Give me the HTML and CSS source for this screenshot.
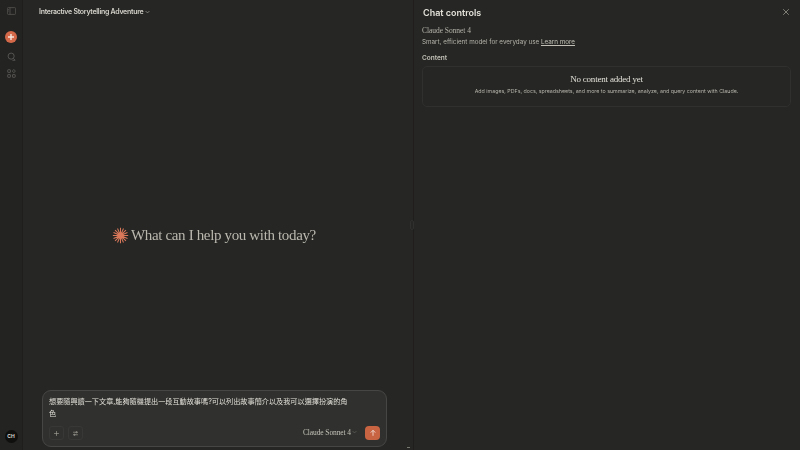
FILE: index.html
```html
<!DOCTYPE html>
<html lang="en">
<head>
    <meta charset="UTF-8">
    <meta name="viewport" content="width=device-width, initial-scale=1.0">
    <title>Interactive Storytelling Adventure</title>
    <link rel="stylesheet" href="styles.css">
</head>
<body>
    <!-- Left icon rail -->
    <div class="sidebar">
        <svg class="rail-icon toggle-icon" viewBox="0 0 12 10"><rect x="0.5" y="0.5" width="11" height="9" rx="1.2"/><path d="M4 0.5V9.5M1.6 3H2.8M1.6 5H2.8"/></svg>
        <div class="new-chat">
            <svg viewBox="0 0 10 10"><path d="M5 2.5V7.5M2.5 5H7.5"/></svg>
        </div>
        <svg class="rail-icon" viewBox="0 0 10 10"><circle cx="4.6" cy="4.6" r="3.4"/><path d="M7.2 7.2L9 9M6 9.2H9.2"/></svg>
        <svg class="rail-icon" viewBox="0 0 10 10"><rect x="0.8" y="0.8" width="3" height="3" rx="0.4"/><path d="M7.6 0.6L9.4 2.3L7.6 4L5.8 2.3Z"/><rect x="0.8" y="6.2" width="3" height="3" rx="0.4"/><rect x="6.1" y="6.2" width="3" height="3" rx="0.4"/></svg>
        <div class="avatar">CH</div>
    </div>

    <div class="main">
        <div class="chat-title">
            <span>Interactive Storytelling Adventure</span>
            <svg class="chevron" viewBox="0 0 8 5"><path d="M1 1L4 4L7 1"/></svg>
        </div>

        <div class="greeting">
            <svg class="spark" viewBox="0 0 20 20">
                <path d="M10 1V19M1 10H19M3.6 3.6L16.4 16.4M16.4 3.6L3.6 16.4M6.5 1.8L13.5 18.2M13.5 1.8L6.5 18.2M1.8 6.5L18.2 13.5M1.8 13.5L18.2 6.5"/>
                <circle cx="10" cy="10" r="3.2"/>
            </svg>
            <h1>What can I help you with today?</h1>
        </div>

        <!-- Message box -->
        <div class="composer">
            <p class="composer-text">想要隨興讀一下文章,能夠隨機提出一段互動故事嗎?可以列出故事簡介以及我可以選擇扮演的角色</p>
            <div class="composer-bar">
                <button class="tool-btn">
                    <svg viewBox="0 0 10 10"><path d="M5 1.5V8.5M1.5 5H8.5"/></svg>
                </button>
                <button class="tool-btn">
                    <svg viewBox="0 0 10 10"><path d="M1.5 3.2H8.5M1.5 6.8H8.5"/><circle cx="6.4" cy="3.2" r="0.9"/><circle cx="3.6" cy="6.8" r="0.9"/></svg>
                </button>
                <div class="model-pick">
                    <span>Claude Sonnet 4</span>
                    <svg class="chevron" viewBox="0 0 8 5"><path d="M1 1L4 4L7 1"/></svg>
                </div>
                <button class="send-btn">
                    <svg viewBox="0 0 10 10"><path d="M5 8.5V1.8M2.2 4.5L5 1.6L7.8 4.5"/></svg>
                </button>
            </div>
        </div>
    </div>

    <!-- Chat controls panel -->
    <div class="panel">
        <div class="resize-handle"></div>
        <div class="scroll-mark"></div>
        <div class="panel-head">
            <h2>Chat controls</h2>
            <svg class="close-icon" viewBox="0 0 10 10"><path d="M1.5 1.5L8.5 8.5M8.5 1.5L1.5 8.5"/></svg>
        </div>
        <div class="model-name">Claude Sonnet 4</div>
        <div class="model-desc">Smart, efficient model for everyday use <a href="#">Learn more</a></div>
        <h3>Content</h3>
        <div class="content-box">
            <div class="content-title">No content added yet</div>
            <div class="content-desc">Add images, PDFs, docs, spreadsheets, and more to summarize, analyze, and query content with Claude.</div>
        </div>
    </div>
</body>
</html>
```

FILE: styles.css
```css
/* Global Styles */
* {
    box-sizing: border-box;
}

body {
    font-family: 'Inter', 'Noto Sans CJK TC', sans-serif;
    margin: 0;
    width: 800px;
    height: 450px;
    overflow: hidden;
    display: flex;
    background-color: #262624;
    color: #c2c0b6;
}

svg {
    fill: none;
    stroke: currentColor;
    display: block;
}

/* Sidebar */
.sidebar {
    width: 23px;
    flex-shrink: 0;
    border-right: 1px solid #1f1e1d;
    background-color: #232322;
    display: flex;
    flex-direction: column;
    align-items: center;
    padding-top: 7px;
    padding-bottom: 7px;
    color: #5f5e5a;
}

.rail-icon {
    width: 9px;
    height: 9px;
    stroke-width: 0.9;
    margin-bottom: 8px;
}

.toggle-icon {
    width: 9px;
    height: 8px;
    margin-bottom: 16px;
}

.new-chat {
    width: 12px;
    height: 12px;
    border-radius: 50%;
    background-color: #d4694a;
    color: #f4e4dc;
    margin-bottom: 9px;
}

.new-chat svg {
    width: 12px;
    height: 12px;
    stroke-width: 1.2;
}

.avatar {
    margin-top: auto;
    width: 13px;
    height: 13px;
    border-radius: 50%;
    background-color: #0f0f0e;
    color: #d8d6ce;
    font-size: 5px;
    font-weight: 700;
    line-height: 13px;
    text-align: center;
}

/* Main chat column */
.main {
    width: 390px;
    flex-shrink: 0;
    display: flex;
    flex-direction: column;
    padding-bottom: 3px;
    will-change: opacity;
}

.chat-title {
    height: 23px;
    padding-left: 16px;
    display: flex;
    align-items: center;
    gap: 2px;
    font-size: 7px;
    font-weight: 600;
    letter-spacing: -0.28px;
    color: #d4d2ca;
}

.chevron {
    width: 5px;
    height: 4px;
    stroke-width: 0.8;
}

.greeting {
    flex-grow: 1;
    display: flex;
    align-items: center;
    gap: 2px;
    padding-left: 89px;
    padding-top: 58px;
}

.spark {
    width: 17px;
    height: 17px;
    color: #d9785a;
    stroke-width: 1.2;
    fill: #d9785a;
}

.greeting h1 {
    margin: 0;
    font-family: 'Liberation Serif', serif;
    font-size: 15px;
    font-weight: 400;
    letter-spacing: -0.35px;
    color: #bab8af;
}

.composer {
    width: 345px;
    height: 57px;
    margin-left: 19px;
    padding: 5px 6px 6px 6px;
    border: 1px solid #464644;
    border-radius: 9px;
    background-color: #30302e;
    display: flex;
    flex-direction: column;
}

.composer-text {
    margin: 0;
    width: 303px;
    font-size: 7.15px;
    line-height: 11.5px;
    color: #e0ded6;
}

.composer-bar {
    margin-top: auto;
    display: flex;
    align-items: center;
    gap: 4px;
}

.tool-btn {
    width: 15px;
    height: 14px;
    padding: 3px;
    border: 1px solid #383836;
    border-radius: 3px;
    background: none;
    color: #a3a197;
}

.tool-btn svg {
    width: 7px;
    height: 7px;
    stroke-width: 0.9;
}

.model-pick {
    margin-left: auto;
    display: flex;
    align-items: center;
    gap: 1px;
    margin-right: 4px;
    padding-bottom: 2px;
    font-family: 'Liberation Serif', serif;
    font-size: 7.5px;
    letter-spacing: -0.1px;
    color: #c2c0b6;
}

.model-pick .chevron {
    color: #77766f;
}

.send-btn {
    width: 15px;
    height: 14px;
    padding: 3px 3.5px;
    border: none;
    border-radius: 4px;
    background-color: #c96442;
    color: #f5e9e3;
}

.send-btn svg {
    width: 8px;
    height: 8px;
    stroke-width: 1;
}

/* Chat controls panel */
.panel {
    flex-grow: 1;
    position: relative;
    border-left: 1px solid #1f1e1d;
    padding: 0 9px 0 8px;
    will-change: opacity;
}

.resize-handle {
    position: absolute;
    left: -4px;
    top: 220px;
    width: 4px;
    height: 10px;
    border: 1px solid #30302e;
    border-radius: 2px;
    background-color: #262624;
}

.scroll-mark {
    position: absolute;
    left: -7px;
    top: 447px;
    width: 3px;
    height: 1px;
    background-color: #77766f;
}

.panel-head {
    height: 24px;
    display: flex;
    align-items: center;
    justify-content: space-between;
}

.panel-head h2 {
    margin: 0 0 0 1px;
    font-size: 9px;
    font-weight: 600;
    color: #e2e0d8;
}

.close-icon {
    width: 8px;
    height: 8px;
    stroke-width: 0.9;
    color: #a3a197;
    margin-right: 1px;
}

.model-name {
    font-family: 'Liberation Serif', serif;
    font-size: 7.5px;
    line-height: 11px;
    letter-spacing: -0.05px;
    margin-top: 1px;
    color: #b5b3aa;
}

.model-desc {
    font-size: 6.3px;
    line-height: 11px;
    margin-top: 1px;
    color: #b5b3aa;
}

.model-desc a {
    color: #c2c0b6;
}

.panel h3 {
    margin: 5px 0 2px;
    font-size: 6.5px;
    line-height: 11px;
    font-weight: 600;
    color: #c2c0b6;
}

.content-box {
    height: 41px;
    border: 1px solid #30302e;
    border-radius: 5px;
    text-align: center;
    padding-top: 6px;
}

.content-title {
    font-family: 'Liberation Serif', serif;
    font-size: 9px;
    line-height: 13px;
    letter-spacing: -0.2px;
    color: #e2e0d8;
}

.content-desc {
    font-size: 5.3px;
    line-height: 10px;
    color: #b5b3aa;
}
```
